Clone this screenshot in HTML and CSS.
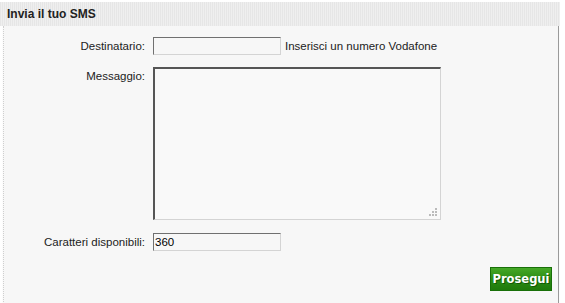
FILE: index.html
```html
<!DOCTYPE html>
<html lang="it">
<head>
    <meta charset="UTF-8">
    <title>Invia il tuo SMS</title>
    <link rel="stylesheet" href="styles.css">
</head>
<body>
    <div class="box">
        <div class="box-titolo">Invia il tuo SMS</div>
        <div class="box-corpo">
            <div class="riga">
                <label class="etichetta" for="dest">Destinatario:</label>
                <input type="text" id="dest" class="campo">
                <span class="nota">Inserisci un numero Vodafone</span>
            </div>
            <div class="riga riga-msg">
                <label class="etichetta" for="msg">Messaggio:</label>
                <div class="area-wrap">
                    <textarea id="msg" class="area"></textarea>
                    <span class="grip"></span>
                </div>
            </div>
            <div class="riga riga-car">
                <label class="etichetta" for="car">Caratteri disponibili:</label>
                <input type="text" id="car" class="campo" value="360">
            </div>
            <div class="azioni">
                <button class="prosegui">Prosegui</button>
            </div>
        </div>
    </div>
</body>
</html>
```

FILE: styles.css
```css
body {
    margin: 0;
    background: #fff;
    font-family: "Liberation Sans", Arial, sans-serif;
    font-size: 11.5px;
    color: #222;
}
.box {
    width: 560px;
    padding-top: 2px;
}
.box-titolo {
    height: 24px;
    line-height: 24px;
    padding-left: 7px;
    font-weight: bold;
    font-size: 12px;
    color: #222;
    background-color: #ececec;
    background-image: repeating-linear-gradient(90deg, #e6e6e6 0 1px, #efefef 1px 2px);
}
.box-corpo {
    margin-left: 3px;
    width: 554px;
    height: 268px;
    background: #f7f7f7;
    border-left: 1px dotted #cfcfcf;
    border-right: 1px solid #9a9a9a;
    border-bottom: 1px solid #d8d8d8;
    box-shadow: 0 2px 1px #ececec;
    padding-top: 11px;
    box-sizing: content-box;
}
.riga {
    display: flex;
    align-items: center;
}
.riga-msg {
    align-items: flex-start;
    margin-top: 12px;
}
.riga-car {
    margin-top: 13px;
}
.etichetta {
    width: 141px;
    text-align: right;
    padding-right: 8px;
    color: #222;
}
.riga-msg .etichetta {
    padding-top: 3px;
}
.campo {
    width: 128px;
    height: 18px;
    box-sizing: border-box;
    margin: 0;
    padding: 0 1px;
    font-family: "Liberation Sans", Arial, sans-serif;
    font-size: 11.5px;
    color: #000;
    background: #f7f7f7;
    border: 1px solid #d4d4d4;
    border-top-color: #707070;
    border-left-color: #707070;
}
.nota {
    margin-left: 4px;
    color: #222;
}
.area-wrap {
    position: relative;
}
.area {
    display: block;
    width: 288px;
    height: 153px;
    box-sizing: border-box;
    margin: 0;
    resize: none;
    background: #f9f9f9;
    border: 1px solid #d4d4d4;
    border-top: 2px solid #555;
    border-left: 2px solid #555;
}
.grip {
    position: absolute;
    right: 3px;
    bottom: 3px;
    width: 9px;
    height: 9px;
    background:
        linear-gradient(#bbb, #bbb) 6px 0 / 2px 2px no-repeat,
        linear-gradient(#bbb, #bbb) 3px 3px / 2px 2px no-repeat,
        linear-gradient(#bbb, #bbb) 6px 3px / 2px 2px no-repeat,
        linear-gradient(#bbb, #bbb) 0 6px / 2px 2px no-repeat,
        linear-gradient(#bbb, #bbb) 3px 6px / 2px 2px no-repeat,
        linear-gradient(#bbb, #bbb) 6px 6px / 2px 2px no-repeat;
}
.azioni {
    display: flex;
    justify-content: flex-end;
    padding-right: 6px;
    margin-top: 16px;
}
.prosegui {
    width: 62px;
    height: 24px;
    padding: 0;
    font-family: "DejaVu Sans", Verdana, sans-serif;
    font-size: 11.5px;
    font-weight: bold;
    color: #fff;
    text-shadow: 1px 1px 0 #115a05;
    background: linear-gradient(#45a827, #2c8c14 50%, #1f7a0c);
    border: 1px solid #197009;
    border-radius: 0;
    cursor: pointer;
}
```
